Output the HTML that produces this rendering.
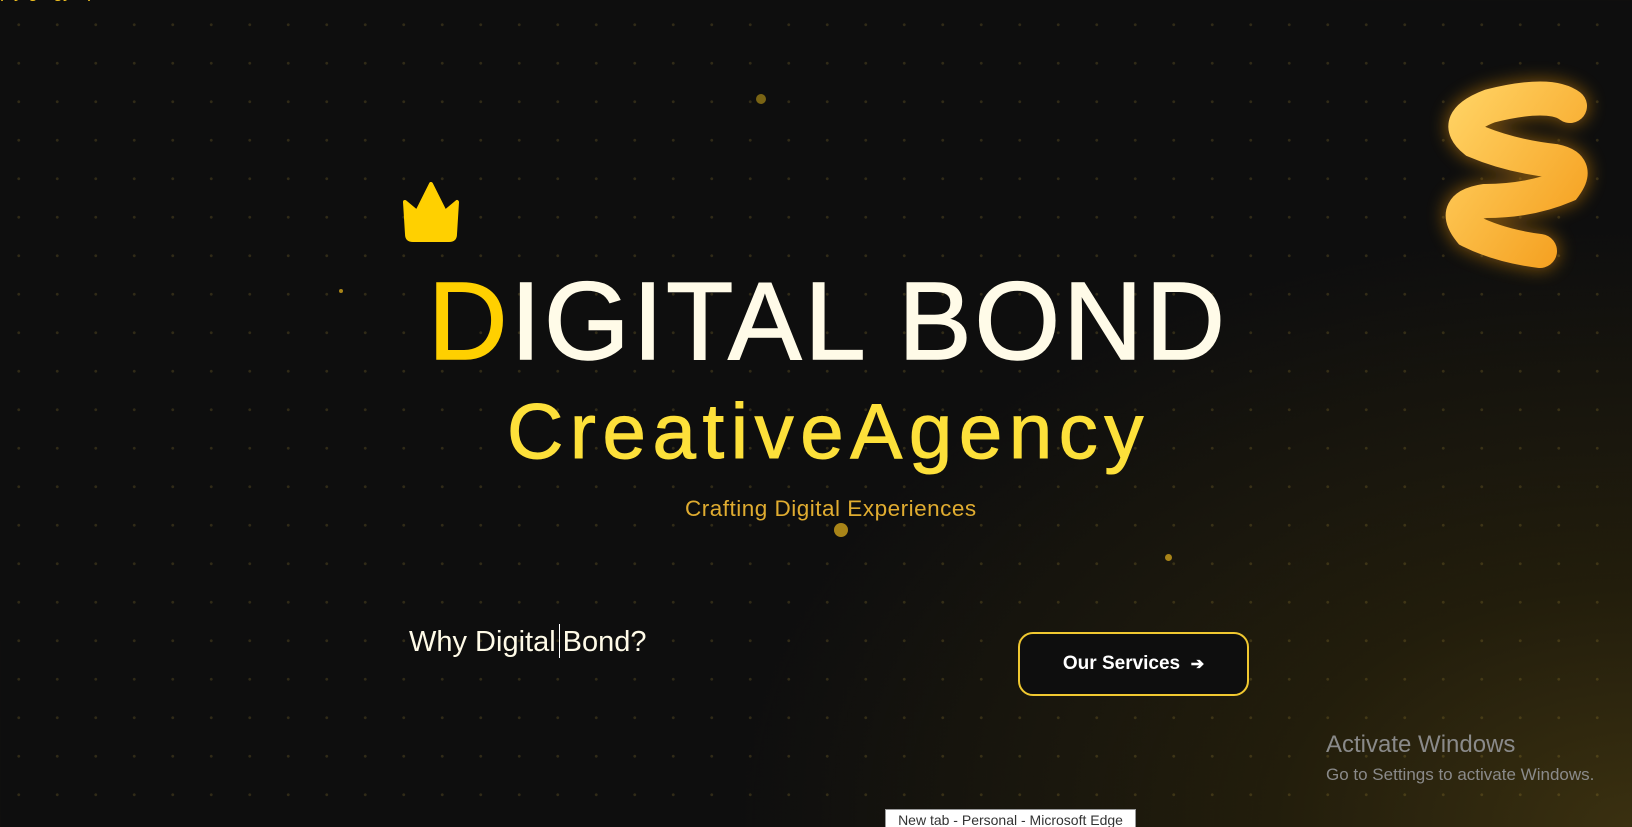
<!DOCTYPE html>
<html><head><meta charset="utf-8"><style>
html,body{margin:0;padding:0;width:1632px;height:827px;overflow:hidden;}
body{position:relative;font-family:"Liberation Sans",sans-serif;
background:radial-gradient(ellipse 900px 600px at 1632px 827px,#3a3010 0%,#221d0c 40%,rgba(13,13,13,0) 100%),#0e0e0e;}
.grid{position:absolute;inset:0;background-image:radial-gradient(circle,rgba(190,160,60,0.2) 1.1px,transparent 1.7px);background-size:38.5px 38.5px;background-position:38px 44px;}
.a{position:absolute;white-space:nowrap;}
.dot{position:absolute;border-radius:50%;background:#a88418;}
</style></head><body>
<div class="grid"></div>
<div class="dot" style="left:756px;top:94px;width:10px;height:10px;background:#7a6414"></div>
<div class="dot" style="left:339px;top:289px;width:4px;height:4px"></div>
<div class="dot" style="left:834px;top:523px;width:14px;height:14px;background:#a88418"></div>
<div class="dot" style="left:1165px;top:554px;width:7px;height:7px"></div>
<div class="a" style="left:0;top:-19px;color:#f0c020;font-size:18px;">ply ge gy ep</div>
<svg class="a" style="left:401px;top:182px" width="60" height="60" viewBox="0 0 60 60">
<path d="M4 20 L16 30 L30 2 L44 30 L56 20 L54 52 Q54 58 48 58 L12 58 Q6 58 6 52 Z" fill="#ffd000" stroke="#ffd000" stroke-width="4" stroke-linejoin="round"/></svg>
<div class="a" style="left:428px;top:262px;font-size:110px;line-height:120px;color:#fffbe8;letter-spacing:3px;-webkit-text-stroke:1.5px #fffbe8;"><span style="color:#ffd000;-webkit-text-stroke:1.5px #ffd000">D</span>IGITAL BOND</div>
<div class="a" style="left:507px;top:386px;font-size:78px;line-height:90px;color:#fde03a;letter-spacing:6.6px;-webkit-text-stroke:1px #fde03a;">CreativeAgency</div>
<div class="a" style="left:685px;top:496px;font-size:22.5px;color:#e0ac30;letter-spacing:0.5px;">Crafting Digital Experiences</div>
<div class="a" style="left:409px;top:624px;font-size:29px;color:#fffbe8;">Why Digital<span style="display:inline-block;width:1px;height:34px;background:#fff;vertical-align:-7px;margin:0 3px"></span>Bond?</div>
<div class="a" style="left:1018px;top:632px;width:227px;height:60px;border:2px solid #f0c830;border-radius:15px;background:#0e0e0e;color:#fff;font-weight:bold;font-size:19px;line-height:60px;text-align:center;">Our Services &nbsp;<span style="font-size:16px">➔</span></div>
<svg class="a" style="left:1420px;top:56px" width="190" height="230" viewBox="-10 -10 190 230">
<defs><linearGradient id="g" x1="0" y1="0" x2="1" y2="1"><stop offset="0" stop-color="#ffd060"/><stop offset="1" stop-color="#f5a020"/></linearGradient>
<filter id="f" x="-50%" y="-50%" width="200%" height="200%"><feGaussianBlur stdDeviation="8"/></filter></defs>
<path d="M140 40 Q120 25 60 40 Q20 55 45 75 Q80 90 125 95 Q150 100 135 120 Q100 135 55 135 Q20 140 40 165 Q70 180 110 185" fill="none" stroke="#c88010" stroke-width="40" stroke-linecap="round" filter="url(#f)" opacity="0.5"/>
<path d="M140 40 Q120 25 60 40 Q20 55 45 75 Q80 90 125 95 Q150 100 135 120 Q100 135 55 135 Q20 140 40 165 Q70 180 110 185" fill="none" stroke="url(#g)" stroke-width="34" stroke-linecap="round"/>
</svg>
<div class="a" style="left:1326px;top:731px;font-size:24px;color:#8a8a8a;">Activate Windows</div>
<div class="a" style="left:1326px;top:765px;font-size:17px;color:#8a8a8a;">Go to Settings to activate Windows.</div>
<div class="a" style="left:885px;top:809px;width:249px;height:20px;background:#fff;border:1px solid #999;font-size:14px;line-height:20px;color:#333;text-align:center;">New tab - Personal - Microsoft Edge</div>
</body></html>
